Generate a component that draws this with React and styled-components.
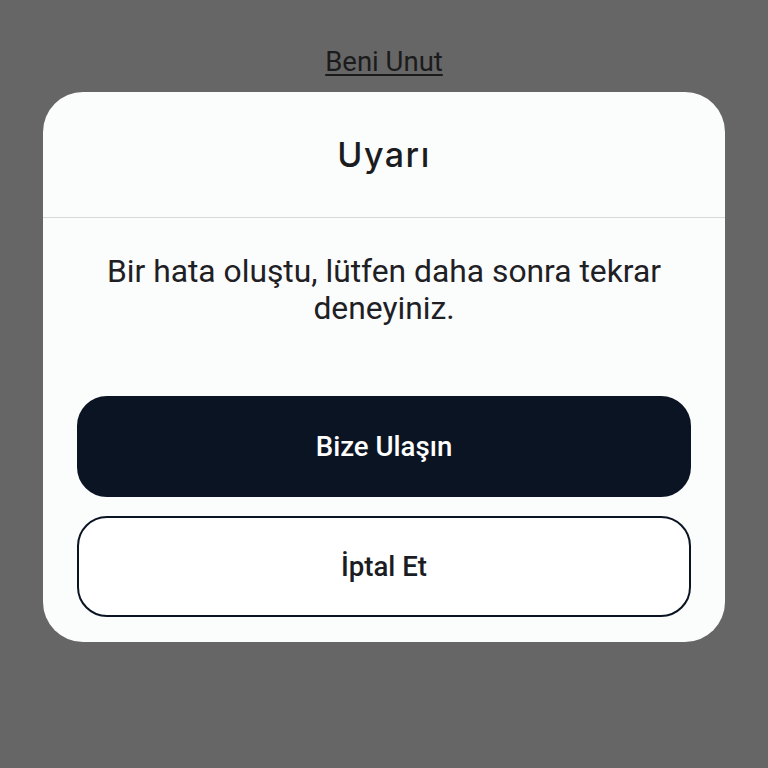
import styled, { createGlobalStyle } from "styled-components";

const GlobalStyle = createGlobalStyle`
    html, body {
        margin: 0;
        padding: 0;
        background: #666666;
    }
    body {
        font-family: Roboto, "Liberation Sans", sans-serif;
    }
`;

const Page = styled.div`
    min-height: 768px;
    display: flex;
    flex-direction: column;
    align-items: center;
    padding: 46px 43px 0;
    box-sizing: border-box;
`;

const ForgetLink = styled.a`
    font-size: 27.5px;
    line-height: 32px;
    color: #1b1b1b;
    text-decoration: underline;
    text-underline-offset: 3px;
    cursor: pointer;
    margin-bottom: 14px;
`;

const Dialog = styled.div`
    width: 100%;
    background: #fbfcfc;
    border-radius: 40px;
    overflow: hidden;
`;

const DialogHeader = styled.div`
    height: 125px;
    display: flex;
    align-items: center;
    justify-content: center;
    border-bottom: 1px solid #d6d8d9;
`;

const DialogTitle = styled.h2`
    margin: 0;
    font-family: Inter, "Noto Sans", sans-serif;
    font-size: 34px;
    font-weight: 500;
    letter-spacing: 1.5px;
    color: #1a1c20;
`;

const DialogBody = styled.div`
    padding: 35px 34px 25px;
    display: flex;
    flex-direction: column;
`;

const Message = styled.p`
    margin: 0 0 69px;
    font-size: 31.8px;
    line-height: 37px;
    text-align: center;
    color: #1e2024;
`;

const Actions = styled.div`
    display: flex;
    flex-direction: column;
    gap: 19px;
`;

const ActionButton = styled.button`
    height: 101px;
    border-radius: 30px;
    font-family: Roboto, "Liberation Sans", sans-serif;
    font-size: 27.6px;
    font-weight: 500;
    cursor: pointer;
    border: 2px solid #0b1423;
    background: ${({ $primary }) => ($primary ? "#0b1423" : "#ffffff")};
    color: ${({ $primary }) => ($primary ? "#ffffff" : "#1a1d24")};
`;

export default function App() {
    return (
        <>
            <GlobalStyle />
            <Page>
                <ForgetLink>Beni Unut</ForgetLink>
                <Dialog>
                    <DialogHeader>
                        <DialogTitle>Uyarı</DialogTitle>
                    </DialogHeader>
                    <DialogBody>
                        <Message>
                            Bir hata oluştu, lütfen daha sonra tekrar
                            deneyiniz.
                        </Message>
                        <Actions>
                            <ActionButton $primary>Bize Ulaşın</ActionButton>
                            <ActionButton>İptal Et</ActionButton>
                        </Actions>
                    </DialogBody>
                </Dialog>
            </Page>
        </>
    );
}
